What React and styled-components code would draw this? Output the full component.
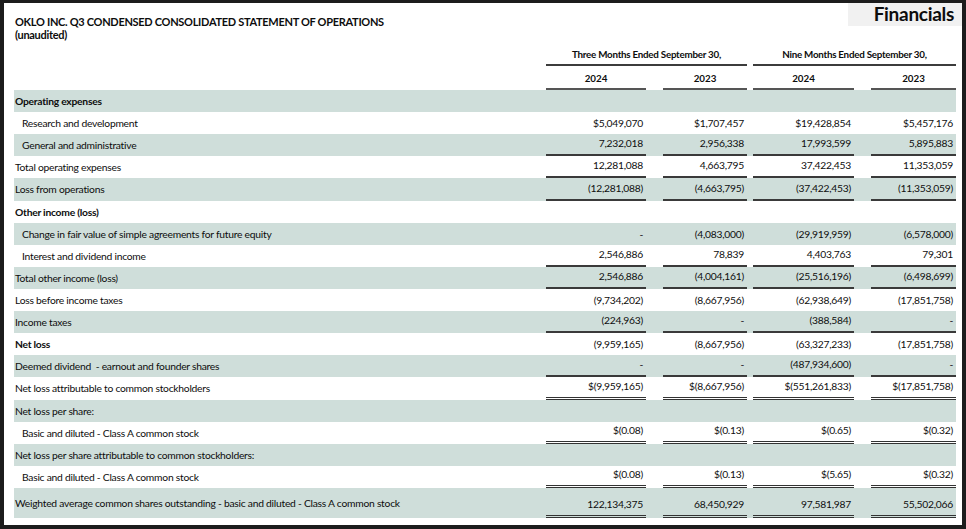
import React from 'react';
import styled, { createGlobalStyle } from 'styled-components';

const COLS = '532px 100px 17px 84px 6px 101px 17px 85px';

const rows = [
  { label: 'Operating expenses', bold: true },
  { label: 'Research and development', indent: true, values: ['$5,049,070', '$1,707,457', '$19,428,854', '$5,457,176'] },
  { label: 'General and administrative', indent: true, values: ['7,232,018', '2,956,338', '17,993,599', '5,895,883'], line: 'single' },
  { label: 'Total operating expenses', values: ['12,281,088', '4,663,795', '37,422,453', '11,353,059'], line: 'single' },
  { label: 'Loss from operations', values: ['(12,281,088)', '(4,663,795)', '(37,422,453)', '(11,353,059)'], line: 'single' },
  { label: 'Other income (loss)', bold: true },
  { label: 'Change in fair value of simple agreements for future equity', indent: true, values: ['-', '(4,083,000)', '(29,919,959)', '(6,578,000)'] },
  { label: 'Interest and dividend income', indent: true, values: ['2,546,886', '78,839', '4,403,763', '79,301'], line: 'single' },
  { label: 'Total other income (loss)', values: ['2,546,886', '(4,004,161)', '(25,516,196)', '(6,498,699)'], line: 'single' },
  { label: 'Loss before income taxes', values: ['(9,734,202)', '(8,667,956)', '(62,938,649)', '(17,851,758)'] },
  { label: 'Income taxes', values: ['(224,963)', '-', '(388,584)', '-'], line: 'single' },
  { label: 'Net loss', bold: true, values: ['(9,959,165)', '(8,667,956)', '(63,327,233)', '(17,851,758)'] },
  { label: 'Deemed dividend  - earnout and founder shares', values: ['-', '-', '(487,934,600)', '-'], line: 'single' },
  { label: 'Net loss attributable to common stockholders', values: ['$(9,959,165)', '$(8,667,956)', '$(551,261,833)', '$(17,851,758)'], line: 'double' },
  { label: 'Net loss per share:' },
  { label: 'Basic and diluted - Class A common stock', indent: true, values: ['$(0.08)', '$(0.13)', '$(0.65)', '$(0.32)'], line: 'double' },
  { label: 'Net loss per share attributable to common stockholders:' },
  { label: 'Basic and diluted - Class A common stock', indent: true, values: ['$(0.08)', '$(0.13)', '$(5.65)', '$(0.32)'], line: 'double' },
  { label: 'Weighted average common shares outstanding - basic and diluted - Class A common stock', tall: true, values: ['122,134,375', '68,450,929', '97,581,987', '55,502,066'], line: 'double' },
];

function App() {
  return (
    <>
      <GlobalStyle />
      <Frame>
        <Panel>
          <TopBar>
            <Title>
              OKLO INC. Q3 CONDENSED CONSOLIDATED STATEMENT OF OPERATIONS
              <br />
              (unaudited)
            </Title>
            <Tag>Financials</Tag>
          </TopBar>
          <PeriodRow>
            <span />
            <Period>Three Months Ended September 30,</Period>
            <span />
            <Period>Nine Months Ended September 30,</Period>
          </PeriodRow>
          <YearRow>
            <span />
            <Year>2024</Year>
            <span />
            <Year>2023</Year>
            <span />
            <Year>2024</Year>
            <span />
            <Year>2023</Year>
          </YearRow>
          {rows.map((r, i) => (
            <Row key={`${r.label}-${i}`} shaded={i % 2 === 0} tall={r.tall}>
              <Label bold={r.bold} indent={r.indent}>{r.label}</Label>
              {[0, 1, 2, 3].map((c) => (
                <React.Fragment key={c}>
                  <Num line={r.values ? r.line : undefined}>
                    {r.values ? r.values[c] : ''}
                  </Num>
                  {c < 3 && <span />}
                </React.Fragment>
              ))}
            </Row>
          ))}
        </Panel>
      </Frame>
    </>
  );
}

const GlobalStyle = createGlobalStyle`
  html, body {
    margin: 0;
    padding: 0;
    background: #1c1c1c;
  }
  body {
    font-family: Lato, "Open Sans", "Liberation Sans", sans-serif;
    color: #0d0d0d;
  }
`;

const Frame = styled.div`
  width: 966px;
  height: 529px;
  box-sizing: border-box;
  padding: 3px 4px 4px 4px;
  background: #1c1c1c;
`;

const Panel = styled.div`
  height: 100%;
  box-sizing: border-box;
  background: #fff;
  padding: 0 6px 0 10px;
  display: flex;
  flex-direction: column;
`;

const TopBar = styled.div`
  display: flex;
  justify-content: space-between;
  align-items: flex-start;
  height: 43px;
  margin-right: -6px;
`;

const Title = styled.div`
  margin-top: 13px;
  padding-left: 1px;
  font-size: 11px;
  font-weight: 700;
  line-height: 12.5px;
  letter-spacing: -0.3px;
`;

const Tag = styled.div`
  width: 114px;
  height: 23px;
  box-sizing: border-box;
  background: #f1f1f1;
  text-align: right;
  padding-right: 8px;
  font-size: 19px;
  font-weight: 700;
  line-height: 21px;
  letter-spacing: -0.3px;
`;

const GridRow = styled.div`
  display: grid;
  grid-template-columns: ${COLS};
`;

const PeriodRow = styled(GridRow)`
  height: 20px;
`;

const Period = styled.div`
  grid-column: span 3;
  border-bottom: 2px solid #3c3c3c;
  text-align: center;
  font-size: 9.8px;
  font-weight: 700;
  line-height: 16px;
  letter-spacing: -0.25px;
`;

const YearRow = styled(GridRow)`
  height: 24px;
`;

const Year = styled.div`
  border-bottom: 2px solid #555;
  display: flex;
  align-items: center;
  justify-content: center;
  padding-top: 2px;
  font-size: 9.8px;
  font-weight: 700;
`;

const Row = styled(GridRow)`
  height: ${(p) => (p.tall ? '30px' : '22.12px')};
  background: ${(p) => (p.shaded ? '#cfdeda' : '#fff')};
  font-size: 10.3px;
  letter-spacing: -0.25px;
`;

const Label = styled.div`
  display: flex;
  align-items: center;
  padding-left: ${(p) => (p.indent ? '8px' : '1px')};
  font-weight: ${(p) => (p.bold ? 700 : 400)};
  white-space: pre;
`;

const lineStyles = {
  single: '2px solid #3a3a3a',
  double: '3px double #333',
};

const Num = styled.div`
  display: flex;
  align-items: flex-end;
  justify-content: flex-end;
  box-sizing: border-box;
  padding: 0 3px 5px 0;
  border-bottom: ${(p) => (p.line ? lineStyles[p.line] : 'none')};
  white-space: nowrap;
`;

export default App;
